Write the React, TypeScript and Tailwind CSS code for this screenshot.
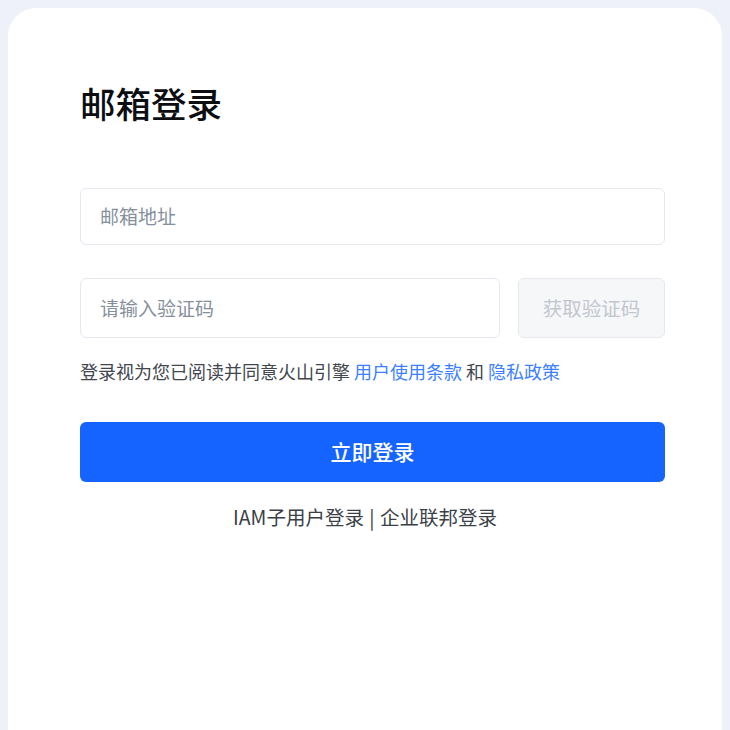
import React from "react";

export default function App() {
  const font = { fontFamily: '"Noto Sans CJK SC", "Noto Sans", sans-serif' };
  return (
    <div className="w-[730px] h-[730px] overflow-hidden bg-[#eef1f9] pt-[8px] px-[8px]" style={font}>
      <div className="bg-white rounded-t-[28px] h-[760px] pl-[72px] pr-[57px] pt-[74px]">
        <h1 className="text-[35.5px] leading-[42px] font-medium text-[#0c0e12]">邮箱登录</h1>
        <div className="mt-[64px] h-[57px] rounded-[6px] border border-[#e5e8ef] flex items-center px-[19px]">
          <span className="text-[19px] text-[#86909c]">邮箱地址</span>
        </div>
        <div className="mt-[33px] flex gap-[18px]">
          <div className="flex-1 h-[60px] rounded-[6px] border border-[#e5e8ef] flex items-center px-[19px]">
            <span className="text-[19px] text-[#86909c]">请输入验证码</span>
          </div>
          <div className="w-[147px] h-[60px] rounded-[6px] border border-[#e5e8ef] bg-[#f6f7f9] flex items-center justify-center">
            <span className="text-[19.5px] text-[#c2c6cd]">获取验证码</span>
          </div>
        </div>
        <p className="mt-[20px] text-[18px] leading-[26px] text-[#42464e]">
          登录视为您已阅读并同意火山引擎 <span className="text-[#3e7fff]">用户使用条款</span> 和 <span className="text-[#3e7fff]">隐私政策</span>
        </p>
        <div className="mt-[38px] h-[60px] rounded-[6px] bg-[#1664ff] flex items-center justify-center">
          <span className="text-[21px] font-medium text-white">立即登录</span>
        </div>
        <div className="mt-[22px] text-center text-[19.5px] leading-[26px] text-[#3b3f47] pr-[15px]">
          IAM子用户登录 <span className="px-[1px]">|</span> 企业联邦登录
        </div>
      </div>
    </div>
  );
}
